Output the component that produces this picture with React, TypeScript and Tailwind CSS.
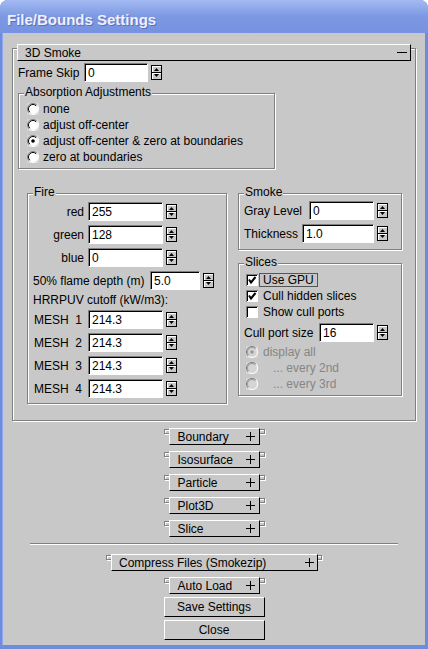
const etched = 'border border-[#808080] shadow-[inset_1px_1px_0_#fff,1px_1px_0_#fff]';
const raised = 'border border-t-white border-l-white border-r-black border-b-black bg-[#c8c8c8]';
const sunken =
  'bg-white border border-t-[#808080] border-l-[#808080] border-r-white border-b-white shadow-[inset_1px_1px_0_#000]';

function Spinner() {
  return (
    <svg width="11" height="15" viewBox="0 0 11 15" shapeRendering="crispEdges" className="ml-[3px] shrink-0">
      <rect x="0.5" y="0.5" width="10" height="14" fill="#c8c8c8" stroke="#000" />
      <line x1="0" y1="7.5" x2="11" y2="7.5" stroke="#000" />
      <path d="M1.5 6.5V1.5H9.5" stroke="#fff" fill="none" />
      <path d="M1.5 13.5V8.5H9.5" stroke="#fff" fill="none" />
      <polygon points="3,6 8,6 5.5,3" fill="#000" shapeRendering="auto" />
      <polygon points="3,9 8,9 5.5,12" fill="#000" shapeRendering="auto" />
    </svg>
  );
}

function Field({ value, w }: { value: string; w: string }) {
  return (
    <div className={`${sunken} ${w} h-[19px] shrink-0 flex items-center pl-[3px]`}>{value}</div>
  );
}

function Radio({ checked, disabled }: { checked?: boolean; disabled?: boolean }) {
  const dark = disabled ? '#9a9a9a' : '#000';
  return (
    <svg width="12" height="12" viewBox="0 0 12 12" className="shrink-0">
      <rect x="0" y="0" width="12" height="12" fill="#d4d4d4" />
      <circle cx="6" cy="6" r="5" fill={disabled ? '#d4d4d4' : '#fff'} />
      <path d="M2.1 9.9 A5.5 5.5 0 0 1 9.9 2.1" stroke="#808080" fill="none" />
      <path d="M2.8 9.2 A4.5 4.5 0 0 1 9.2 2.8" stroke={dark} fill="none" />
      <path d="M9.9 2.1 A5.5 5.5 0 0 1 2.1 9.9" stroke="#fff" fill="none" />
      {checked && <circle cx="6" cy="6" r="1.8" fill={dark} />}
    </svg>
  );
}

function Check({ checked }: { checked?: boolean }) {
  return (
    <svg width="12" height="12" viewBox="0 0 12 12" shapeRendering="crispEdges" className="shrink-0">
      <rect x="0" y="0" width="12" height="12" fill="#fff" />
      <path d="M0.5 11.5V0.5H11.5" stroke="#808080" fill="none" />
      <path d="M1.5 10.5V1.5H10.5" stroke="#000" fill="none" />
      {checked && (
        <path d="M3 5.5L5 8.5L9.5 3" stroke="#000" strokeWidth="2" fill="none" shapeRendering="auto" />
      )}
    </svg>
  );
}

function Plus() {
  return (
    <svg width="9" height="9" viewBox="0 0 9 9" shapeRendering="crispEdges" className="shrink-0">
      <line x1="0" y1="4.5" x2="9" y2="4.5" stroke="#000" />
      <line x1="4.5" y1="0" x2="4.5" y2="9" stroke="#000" />
    </svg>
  );
}

function Group({ title, className, children }: { title: string; className: string; children?: React.ReactNode }) {
  return (
    <div className={`${etched} relative shrink-0 ${className}`}>
      <span className="absolute left-[5px] -top-[9px] px-[1px] bg-[#c8c8c8] leading-[14px]">{title}</span>
      {children}
    </div>
  );
}

function Collapsed({ label, wide, mt }: { label: string; wide?: boolean; mt: string }) {
  return (
    <div className={`flex flex-col ${mt} ${wide ? 'w-[216px]' : 'w-[101px]'}`}>
      <div className={`${etched} h-[5px] w-full mt-[1px]`} />
      <div
        className={`${raised} relative -mt-[6px] ml-[5px] h-[17px] flex items-center justify-between ${
          wide ? 'w-[207px] pl-[7px] pr-[3px]' : 'w-[91px] pl-[8px] pr-[4px]'
        }`}
      >
        <span>{label}</span>
        <Plus />
      </div>
    </div>
  );
}

export default function App() {
  const meshes = ['1', '2', '3', '4'];

  return (
    <div className="w-[428px] h-[649px] flex flex-col bg-[#6f8bdc] rounded-t-[8px] overflow-hidden font-['Liberation_Sans',Arial,sans-serif] text-[12px] leading-none text-black">
      <div className="h-[33px] shrink-0 flex items-center pl-[7px] pt-[6px] bg-gradient-to-b from-[#a3baf2] via-[#7c98e2] to-[#7792e0] text-[15px] font-bold text-[#eef1fb] [text-shadow:1px_1px_0_#5b6fc0]">
        File/Bounds Settings
      </div>

      <div className="flex-1 mx-[3px] mb-[4px] bg-[#c8c8c8] flex flex-col shadow-[-1px_0_0_#8ea6ee]">
        {/* 3D Smoke rollout */}
        <div className={`${etched} ml-[9px] mt-[15px] w-[404px] h-[373px] shrink-0 flex flex-col`}>
          <div className={`${raised} ml-[4px] -mt-[5px] w-[394px] h-[17px] flex items-center justify-between pl-[7px] pr-[3px]`}>
            <span>3D Smoke</span>
            <span className="w-[10px] h-px bg-black" />
          </div>

          <div className="mt-[2px] ml-[5px] flex items-center h-[19px]">
            <span className="w-[66px]">Frame Skip</span>
            <Field value="0" w="w-[64px]" />
            <Spinner />
          </div>

          <Group title="Absorption Adjustments" className="ml-[5px] mt-[11px] w-[257px] h-[76px] pt-[7px] pl-[8px]">
            {['none', 'adjust off-center', 'adjust off-center & zero at boundaries', 'zero at boundaries'].map((t, i) => (
              <div key={t} className="flex items-center h-[16px] gap-[4px]">
                <Radio checked={i === 2} />
                <span>{t}</span>
              </div>
            ))}
          </Group>

          <div className="flex items-start mt-[24px] ml-[14px]">
            <Group title="Fire" className="w-[200px] h-[211px] pt-[8px] flex flex-col gap-[4px]">
              {[
                ['red', '255'],
                ['green', '128'],
                ['blue', '0'],
              ].map(([l, v]) => (
                <div key={l} className="flex items-center h-[19px]">
                  <span className="w-[56px] text-right">{l}</span>
                  <div className="ml-[4px]">
                    <Field value={v} w="w-[75px]" />
                  </div>
                  <Spinner />
                </div>
              ))}
              <div className="flex items-center h-[19px] pl-[5px]">
                <span className="w-[117px]">50% flame depth (m)</span>
                <Field value="5.0" w="w-[50px]" />
                <Spinner />
              </div>
              <div className="flex items-center h-[12px] pl-[5px]">HRRPUV cutoff (kW/m3):</div>
              {meshes.map((m) => (
                <div key={m} className="flex items-center h-[19px]">
                  <span className="w-[56px] pl-[6px] whitespace-pre">{`MESH  ${m}`}</span>
                  <div className="ml-[4px]">
                    <Field value="214.3" w="w-[75px]" />
                  </div>
                  <Spinner />
                </div>
              ))}
            </Group>

            <div className="ml-[11px] w-[164px] flex flex-col">
              <Group title="Smoke" className="w-[164px] h-[57px] pt-[7px] flex flex-col gap-[4px]">
                <div className="flex items-center h-[19px] pl-[5px]">
                  <span className="w-[65px]">Gray Level</span>
                  <Field value="0" w="w-[65px]" />
                  <Spinner />
                </div>
                <div className="flex items-center h-[19px] pl-[5px]">
                  <span className="w-[58px]">Thickness</span>
                  <Field value="1.0" w="w-[72px]" />
                  <Spinner />
                </div>
              </Group>

              <Group title="Slices" className="w-[164px] h-[133px] mt-[13px] pt-[8px] flex flex-col">
                {[
                  ['Use GPU', true, true],
                  ['Cull hidden slices', true, false],
                  ['Show cull ports', false, false],
                ].map(([t, c, f]) => (
                  <div key={t as string} className="flex items-center h-[16px] pl-[7px]">
                    <Check checked={c as boolean} />
                    <span
                      className={`ml-[1px] px-[3px] h-[14px] flex items-center border ${
                        f ? 'border-[#555]' : 'border-transparent'
                      }`}
                    >
                      {t as string}
                    </span>
                  </div>
                ))}
                <div className="mt-[3px] flex items-center h-[19px] pl-[5px]">
                  <span className="w-[75px]">Cull port size</span>
                  <Field value="16" w="w-[55px]" />
                  <Spinner />
                </div>
                <div className="mt-[2px] flex flex-col text-[#868686]">
                  {['display all', '   ... every 2nd', '   ... every 3rd'].map((t, i) => (
                    <div key={t} className="flex items-center h-[16px] pl-[7px] gap-[5px]">
                      <Radio checked={i === 0} disabled />
                      <span className="whitespace-pre">{t}</span>
                    </div>
                  ))}
                </div>
              </Group>
            </div>
          </div>
        </div>

        {/* collapsed rollouts and buttons */}
        <div className="flex flex-col items-center">
          <Collapsed label="Boundary" mt="mt-[7px]" />
          <Collapsed label="Isosurface" mt="mt-[6px]" />
          <Collapsed label="Particle" mt="mt-[6px]" />
          <Collapsed label="Plot3D" mt="mt-[6px]" />
          <Collapsed label="Slice" mt="mt-[6px]" />
          <div className="self-stretch mx-[27px] mt-[6px] border-t border-t-[#808080] border-b border-b-white" />
          <Collapsed label="Compress Files (Smokezip)" wide mt="mt-[9px]" />
          <Collapsed label="Auto Load" mt="mt-[6px]" />
          <div className={`${raised} mt-[3px] w-[101px] h-[20px] flex items-center justify-center`}>Save Settings</div>
          <div className={`${raised} mt-[3px] w-[101px] h-[20px] flex items-center justify-center`}>Close</div>
        </div>
      </div>
    </div>
  );
}
